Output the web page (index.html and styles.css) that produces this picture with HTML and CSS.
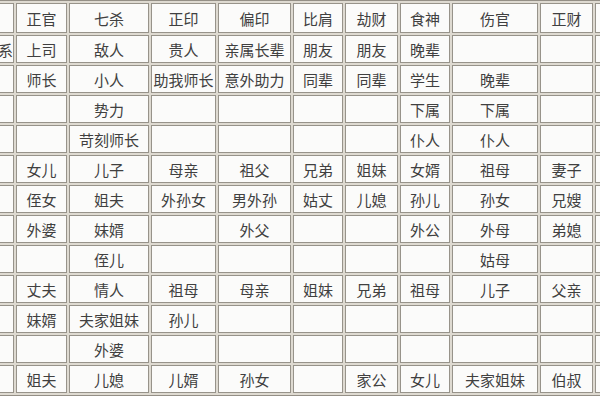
FILE: index.html
```html
<!DOCTYPE html>
<html lang="zh">
<head>
<meta charset="utf-8">
<link rel="stylesheet" href="styles.css">
</head>
<body>
<div class="grid">
<div class="c head"></div><div class="c head">正官</div><div class="c head">七杀</div><div class="c head">正印</div><div class="c head">偏印</div><div class="c head">比肩</div><div class="c head">劫财</div><div class="c head">食神</div><div class="c head">伤官</div><div class="c head">正财</div><div class="c head"></div>
<div class="c cut">关系</div><div class="c">上司</div><div class="c">敌人</div><div class="c">贵人</div><div class="c">亲属长辈</div><div class="c">朋友</div><div class="c">朋友</div><div class="c">晚辈</div><div class="c"></div><div class="c"></div><div class="c"></div>
<div class="c"></div><div class="c">师长</div><div class="c">小人</div><div class="c">助我师长</div><div class="c">意外助力</div><div class="c">同辈</div><div class="c">同辈</div><div class="c">学生</div><div class="c">晚辈</div><div class="c"></div><div class="c"></div>
<div class="c"></div><div class="c"></div><div class="c">势力</div><div class="c"></div><div class="c"></div><div class="c"></div><div class="c"></div><div class="c">下属</div><div class="c">下属</div><div class="c"></div><div class="c"></div>
<div class="c"></div><div class="c"></div><div class="c">苛刻师长</div><div class="c"></div><div class="c"></div><div class="c"></div><div class="c"></div><div class="c">仆人</div><div class="c">仆人</div><div class="c"></div><div class="c"></div>
<div class="c"></div><div class="c">女儿</div><div class="c">儿子</div><div class="c">母亲</div><div class="c">祖父</div><div class="c">兄弟</div><div class="c">姐妹</div><div class="c">女婿</div><div class="c">祖母</div><div class="c">妻子</div><div class="c"></div>
<div class="c"></div><div class="c">侄女</div><div class="c">姐夫</div><div class="c">外孙女</div><div class="c">男外孙</div><div class="c">姑丈</div><div class="c">儿媳</div><div class="c">孙儿</div><div class="c">孙女</div><div class="c">兄嫂</div><div class="c"></div>
<div class="c"></div><div class="c">外婆</div><div class="c">妹婿</div><div class="c"></div><div class="c">外父</div><div class="c"></div><div class="c"></div><div class="c">外公</div><div class="c">外母</div><div class="c">弟媳</div><div class="c"></div>
<div class="c"></div><div class="c"></div><div class="c">侄儿</div><div class="c"></div><div class="c"></div><div class="c"></div><div class="c"></div><div class="c"></div><div class="c">姑母</div><div class="c"></div><div class="c"></div>
<div class="c"></div><div class="c">丈夫</div><div class="c">情人</div><div class="c">祖母</div><div class="c">母亲</div><div class="c">姐妹</div><div class="c">兄弟</div><div class="c">祖母</div><div class="c">儿子</div><div class="c">父亲</div><div class="c"></div>
<div class="c"></div><div class="c">妹婿</div><div class="c">夫家姐妹</div><div class="c">孙儿</div><div class="c"></div><div class="c"></div><div class="c"></div><div class="c"></div><div class="c"></div><div class="c"></div><div class="c"></div>
<div class="c"></div><div class="c"></div><div class="c">外婆</div><div class="c"></div><div class="c"></div><div class="c"></div><div class="c"></div><div class="c"></div><div class="c"></div><div class="c"></div><div class="c"></div>
<div class="c"></div><div class="c">姐夫</div><div class="c">儿媳</div><div class="c">儿婿</div><div class="c">孙女</div><div class="c"></div><div class="c">家公</div><div class="c">女儿</div><div class="c">夫家姐妹</div><div class="c">伯叔</div><div class="c"></div>
</div>
</body>
</html>
```
FILE: styles.css
```css
html, body {
  margin: 0;
  padding: 0;
  background: #ffffff;
  overflow: hidden;
}
body {
  width: 600px;
  height: 400px;
}
.grid {
  display: grid;
  grid-template-columns: 50px 51px 80px 65px 73px 50px 53px 50px 86px 53px 50px;
  grid-template-rows: 30px;
  grid-auto-rows: 28px;
  gap: 2px;
  padding: 2px;
  margin-left: -39px;
  width: max-content;
  background: #dedad1;
  border: 1px solid #948f86;
  font-family: "Noto Sans CJK SC", "Liberation Sans", sans-serif;
  font-size: 15px;
  color: #404040;
}
.c {
  box-sizing: border-box;
  border: 1px solid #97938a;
  background: #fbfbfa;
  display: flex;
  align-items: center;
  justify-content: center;
  white-space: nowrap;
  overflow: hidden;
  line-height: 1;
}
.cut {
  justify-content: flex-end;
}
```
